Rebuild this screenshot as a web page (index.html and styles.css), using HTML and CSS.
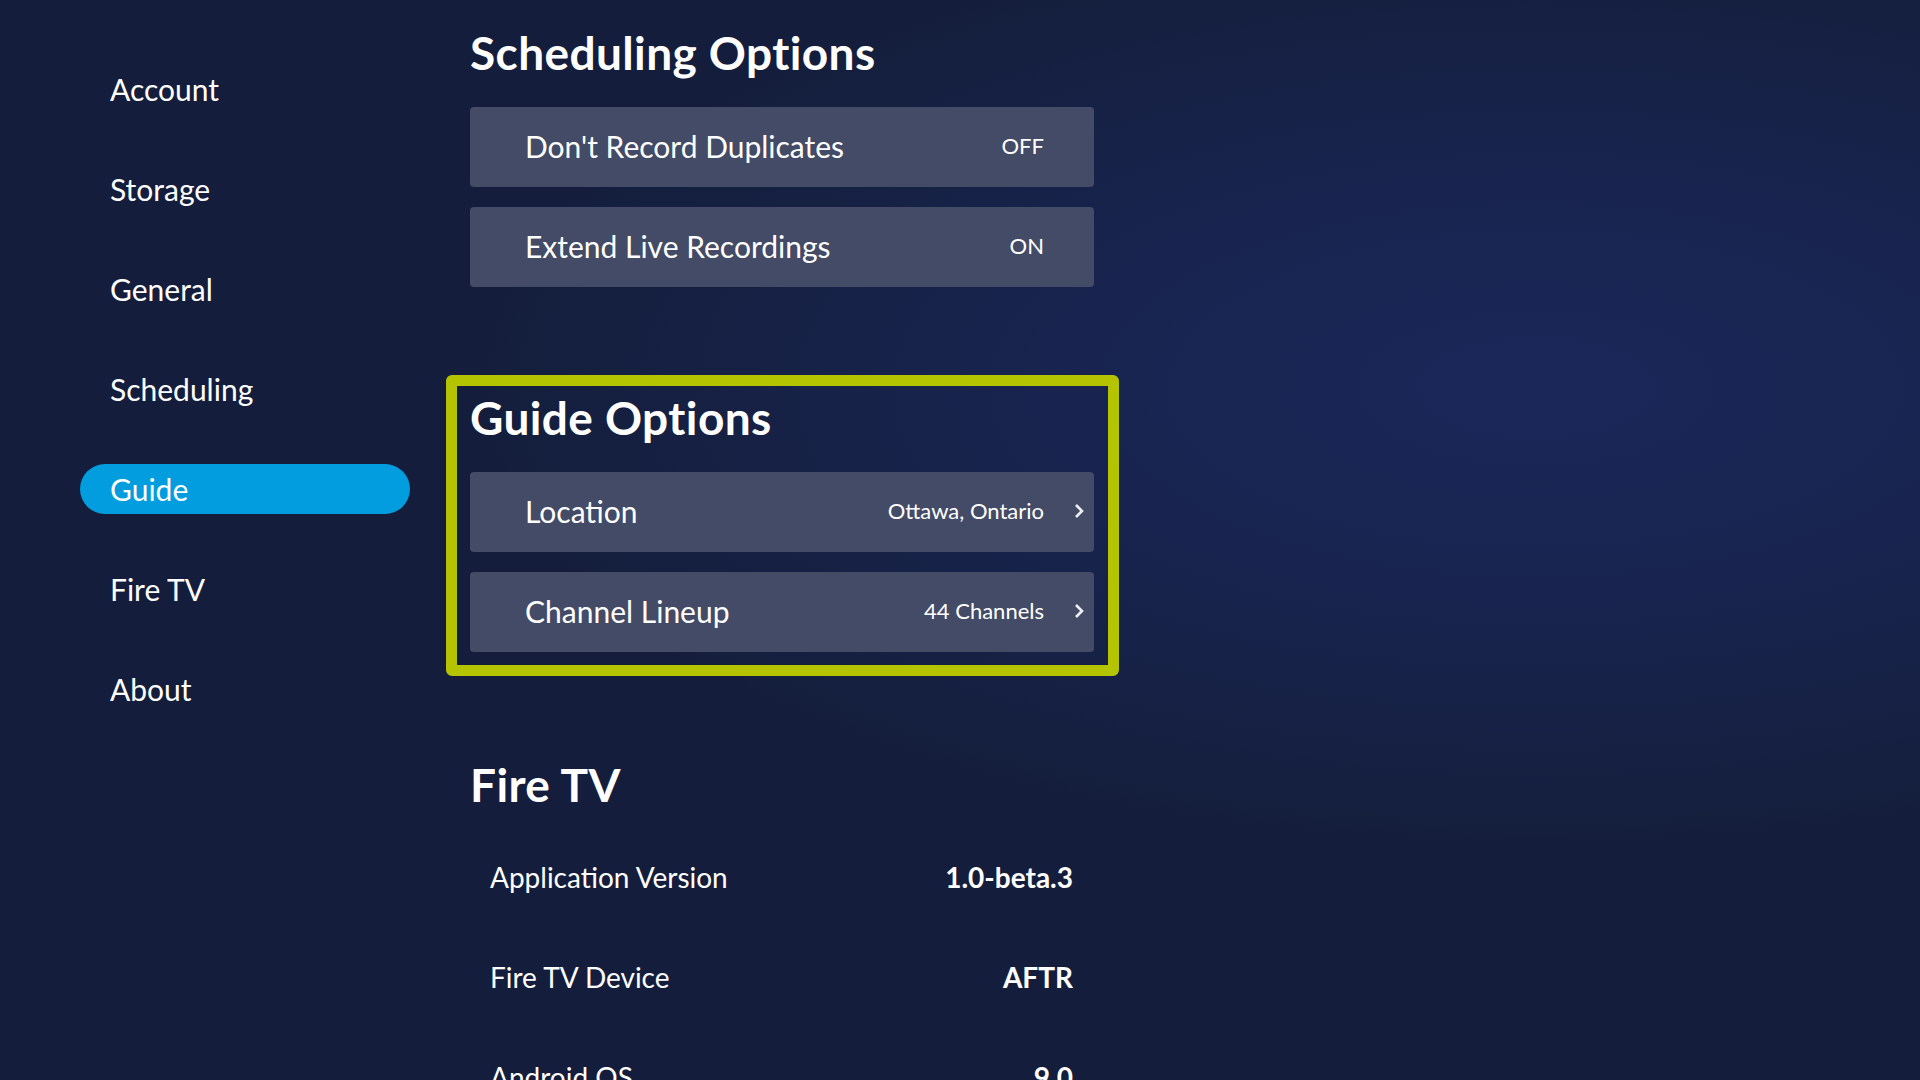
FILE: index.html
```html
<!DOCTYPE html>
<html>
<head>
    <title>Settings - Guide</title>
    <meta charset="utf-8"
          name="viewport"
          content="width=device-width, initial-scale=1.0" />
    <link rel="stylesheet" href="styles.css">
</head>
<body>
    <div class="screen">
        <nav class="sidebar">
            <div class="nav-item">Account</div>
            <div class="nav-item">Storage</div>
            <div class="nav-item">General</div>
            <div class="nav-item">Scheduling</div>
            <div class="nav-item active">Guide</div>
            <div class="nav-item">Fire TV</div>
            <div class="nav-item">About</div>
        </nav>

        <main class="content">
            <section class="group first">
                <h2>Scheduling Options</h2>
                <div class="option">
                    <span class="label">Don't Record Duplicates</span>
                    <span class="value">OFF</span>
                    <span class="arrow"></span>
                </div>
                <div class="option">
                    <span class="label">Extend Live Recordings</span>
                    <span class="value">ON</span>
                    <span class="arrow"></span>
                </div>
            </section>

            <!-- focused section gets the green frame -->
            <section class="group focused">
                <h2>Guide Options</h2>
                <div class="option">
                    <span class="label">Location</span>
                    <span class="value">Ottawa, Ontario</span>
                    <span class="arrow">
                        <svg width="11" height="16" viewBox="0 0 11 16"><path d="M2 2 L8 8 L2 14" fill="none" stroke="#eef0f5" stroke-width="2.6"/></svg>
                    </span>
                </div>
                <div class="option">
                    <span class="label">Channel Lineup</span>
                    <span class="value">44 Channels</span>
                    <span class="arrow">
                        <svg width="11" height="16" viewBox="0 0 11 16"><path d="M2 2 L8 8 L2 14" fill="none" stroke="#eef0f5" stroke-width="2.6"/></svg>
                    </span>
                </div>
            </section>

            <section class="group device">
                <h2>Fire TV</h2>
                <div class="info-row">
                    <span>Application Version</span>
                    <strong>1.0-beta.3</strong>
                </div>
                <div class="info-row">
                    <span>Fire TV Device</span>
                    <strong>AFTR</strong>
                </div>
                <div class="info-row">
                    <span>Android OS</span>
                    <strong>9.0</strong>
                </div>
            </section>
        </main>
    </div>
</body>
</html>
```

FILE: styles.css
```css
/* Reset */
body, h2 {
    margin: 0;
    padding: 0;
}

body {
    height: 100vh;
    overflow: hidden;
    font-family: Lato, "Noto Sans", sans-serif;
    color: #fff;
    background:
        radial-gradient(ellipse 55% 42% at 80% 36%, #1a2759 0%, #18244f 45%, rgba(20, 30, 60, 0) 100%),
        #141e3c;
}

.screen {
    display: flex;
    height: 100vh;
}

/* Left menu */
.sidebar {
    width: 330px;
    margin-left: 80px;
    padding-top: 64px;
    display: flex;
    flex-direction: column;
    gap: 50px;
}

.nav-item {
    height: 50px;
    line-height: 50px;
    padding-left: 30px;
    font-size: 30px;
    border-radius: 25px;
}

.nav-item.active {
    background-color: #019dde;
}

/* Right column */
.content {
    width: 624px;
    margin-left: 60px;
}

.group h2 {
    font-size: 46px;
    line-height: 52px;
    font-weight: 700;
    letter-spacing: 0.4px;
    margin-bottom: 28px;
}

.group.first {
    padding-top: 27px;
}

.option {
    height: 80px;
    box-sizing: border-box;
    display: flex;
    align-items: center;
    padding-left: 55px;
    padding-bottom: 3px;
    background-color: #434b66;
    border-radius: 4px;
}

.option + .option {
    margin-top: 20px;
}

.option .label {
    flex: 1;
    font-size: 30px;
}

.option .value {
    font-size: 22px;
}

.option .arrow {
    width: 50px;
    display: flex;
    justify-content: flex-end;
    padding-right: 9px;
    box-sizing: border-box;
}

.option .arrow svg {
    display: block;
}

.group.focused {
    margin: 88px -25px 0 -24px;
    padding: 6px 14px 13px 13px;
    border: 11px solid #b4c400;
    border-radius: 6px;
}

.group.device {
    margin-top: 83px;
}

.group.device h2 {
    margin-bottom: 16px;
}

.info-row {
    height: 100px;
    display: flex;
    align-items: center;
    justify-content: space-between;
    padding: 0 21px 0 20px;
    font-size: 28px;
}

.info-row strong {
    font-weight: 700;
}
```
